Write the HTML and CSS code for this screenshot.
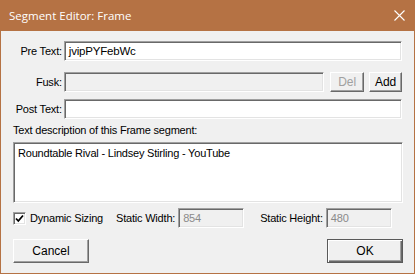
FILE: index.html
```html
<!DOCTYPE html>
<html>
<head>
<meta charset="utf-8">
<link rel="stylesheet" href="styles.css">
</head>
<body>
<div class="window">
  <div class="titlebar">
    <span class="title">Segment Editor: Frame</span>
    <svg class="close" width="11" height="11" viewBox="0 0 11 11"><path d="M0.5 0.5 L10.5 10.5 M10.5 0.5 L0.5 10.5" stroke="#fff" stroke-width="1.1" fill="none"/></svg>
  </div>
  <div class="content">
    <div class="row r1">
      <label class="lbl">Pre Text:</label>
      <div class="field wide">jvipPYFebWc</div>
    </div>
    <div class="row r2">
      <label class="lbl">Fusk:</label>
      <div class="field fusk disabled"></div>
      <div class="btn del">Del</div>
      <div class="btn add">Add</div>
    </div>
    <div class="row r3">
      <label class="lbl">Post Text:</label>
      <div class="field wide"></div>
    </div>
    <div class="desc-label">Text description of this Frame segment:</div>
    <div class="field textarea">Roundtable Rival - Lindsey Stirling - YouTube</div>
    <div class="row sizing">
      <div class="check"><svg width="9" height="9" viewBox="0 0 9 9"><path d="M1 4.5 L3.3 7 L8 1.5" stroke="#000" stroke-width="1.8" fill="none"/></svg></div>
      <span class="check-lbl">Dynamic Sizing</span>
      <span class="sw-lbl">Static Width:</span>
      <div class="field small disabled gray">854</div>
      <span class="sh-lbl">Static Height:</span>
      <div class="field small disabled gray">480</div>
    </div>
    <div class="row buttons">
      <div class="btn big">Cancel</div>
      <div class="btn big ok">OK</div>
    </div>
  </div>
</div>
</body>
</html>
```
FILE: styles.css
```css
html, body {
  margin: 0;
  padding: 0;
  background: #fff;
}
.window {
  width: 415px;
  height: 274px;
  box-sizing: border-box;
  border: 1px solid #b57244;
  border-top: none;
  background: #f0f0f0;
  font-family: "Liberation Sans", Arial, sans-serif;
  font-size: 11px;
  letter-spacing: -0.2px;
  color: #000;
  display: flex;
  flex-direction: column;
}
.titlebar {
  height: 31px;
  margin: 0 -1px;
  background: #b57244;
  display: flex;
  align-items: center;
  justify-content: space-between;
  padding: 0 10px 0 9px;
  box-sizing: border-box;
  letter-spacing: 0;
}
.title {
  color: #fff;
  font-family: "Open Sans", "Noto Sans", sans-serif;
  font-size: 11.5px;
  margin-top: -1px;
}
.close {
  display: block;
}
.content {
  flex: 1;
  padding: 10px 12px 0 0;
  display: flex;
  flex-direction: column;
}
.row {
  display: flex;
  align-items: center;
}
.lbl {
  width: 61px;
  text-align: right;
  margin-right: 2px;
}
.field {
  box-sizing: border-box;
  height: 20px;
  background: #fff;
  border-top: 1px solid #a0a0a0;
  border-left: 1px solid #a0a0a0;
  border-bottom: 1px solid #fff;
  border-right: 1px solid #fff;
  box-shadow: inset 1px 1px 0 #696969, inset -1px -1px 0 #e3e3e3;
  padding: 3px 4px 0 4px;
  white-space: nowrap;
}
.wide {
  width: 339px;
}
.r1 .field {
  padding-left: 4px;
  font-size: 11.5px;
  padding-top: 3px;
}
.r2 {
  margin-top: 11px;
}
.fusk {
  width: 261px;
}
.disabled {
  background: #f0f0f0;
}
.btn {
  box-sizing: border-box;
  background: #f0f0f0;
  border-top: 1px solid #fff;
  border-left: 1px solid #fff;
  border-right: 1px solid #696969;
  border-bottom: 1px solid #696969;
  box-shadow: inset -1px -1px 0 #a0a0a0;
  display: flex;
  align-items: center;
  justify-content: center;
  font-size: 12px;
  letter-spacing: 0;
}
.del {
  width: 34px;
  height: 20px;
  margin-left: 6px;
  color: #a0a0a0;
}
.add {
  width: 33px;
  height: 20px;
  margin-left: 5px;
}
.r3 {
  margin-top: 7px;
}
.desc-label {
  margin: 5px 0 0 12px;
  height: 13px;
}
.textarea {
  margin: 5px 0 0 12px;
  width: 390px;
  height: 61px;
  padding: 4px 0 0 4px;
}
.sizing {
  margin-top: 5px;
  margin-left: 12px;
  height: 20px;
}
.check {
  box-sizing: border-box;
  width: 13px;
  height: 13px;
  background: #fff;
  border-top: 1px solid #a0a0a0;
  border-left: 1px solid #a0a0a0;
  border-bottom: 1px solid #fff;
  border-right: 1px solid #fff;
  box-shadow: inset 1px 1px 0 #696969, inset -1px -1px 0 #e3e3e3;
  display: flex;
  align-items: center;
  justify-content: center;
}
.check svg {
  display: block;
}
.check-lbl {
  margin-left: 4px;
}
.sw-lbl {
  margin-left: 13px;
}
.small {
  width: 66px;
  margin-left: 3px;
}
.gray {
  color: #8a8a8a;
}
.sh-lbl {
  margin-left: 16px;
}
.buttons {
  margin-top: 11px;
  margin-left: 12px;
  justify-content: space-between;
  margin-right: -1px;
}
.big {
  width: 76px;
  height: 24px;
}
.ok {
  border: 1px solid #5a5a5a;
  box-shadow: inset 1px 1px 0 #fff, inset -1px -1px 0 #696969, inset -2px -2px 0 #a0a0a0;
}
```
